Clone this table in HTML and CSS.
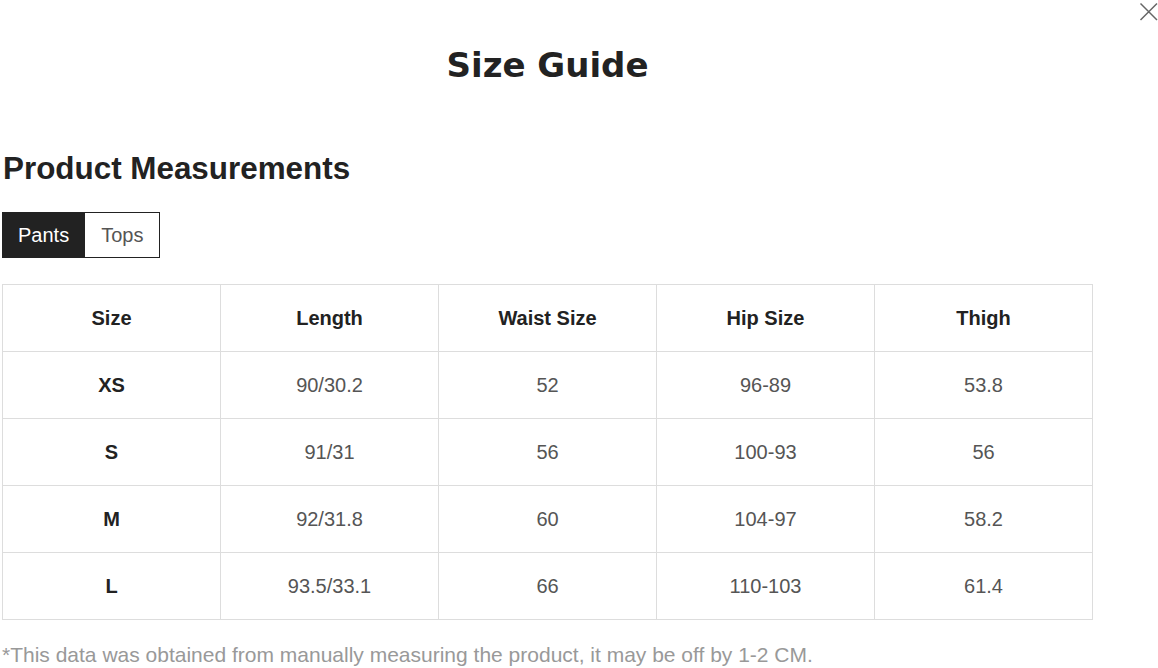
FILE: index.html
```html
<!DOCTYPE html>
<html>
<head>
<meta charset="utf-8">
<link rel="stylesheet" href="styles.css">
</head>
<body>
<button class="close" aria-label="Close">
  <svg width="20" height="20" viewBox="0 0 20 20"><path d="M2.5 2.5L19 19M19 2.5L2.5 19" stroke="#666" stroke-width="1.5" fill="none"/></svg>
</button>
<div class="guide">
  <h1 class="title">Size Guide</h1>
  <h2 class="section">Product Measurements</h2>
  <div class="tabs">
    <span class="tab active">Pants</span>
    <span class="tab">Tops</span>
  </div>
  <table class="sizes">
    <thead>
      <tr><th>Size</th><th>Length</th><th>Waist Size</th><th>Hip Size</th><th>Thigh</th></tr>
    </thead>
    <tbody>
      <tr><th>XS</th><td>90/30.2</td><td>52</td><td>96-89</td><td>53.8</td></tr>
      <tr><th>S</th><td>91/31</td><td>56</td><td>100-93</td><td>56</td></tr>
      <tr><th>M</th><td>92/31.8</td><td>60</td><td>104-97</td><td>58.2</td></tr>
      <tr><th>L</th><td>93.5/33.1</td><td>66</td><td>110-103</td><td>61.4</td></tr>
    </tbody>
  </table>
  <p class="note">*This data was obtained from manually measuring the product, it may be off by 1-2 CM.</p>
</div>
</body>
</html>
```
FILE: styles.css
```css
html, body {
  margin: 0;
  padding: 0;
  background: #fff;
}
body {
  font-family: "Liberation Sans", Arial, sans-serif;
  color: #222;
  width: 1158px;
  height: 668px;
  overflow: hidden;
}
.close {
  position: absolute;
  top: 1px;
  right: 0;
  width: 20px;
  height: 20px;
  padding: 0;
  border: 0;
  background: none;
}
.guide {
  width: 1091px;
  margin-left: 2px;
  padding-top: 45px;
}
.title {
  margin: 0;
  text-align: center;
  font-family: "DejaVu Sans", Verdana, sans-serif;
  font-size: 34px;
  line-height: 40px;
  font-weight: 700;
  color: #222;
}
.section {
  margin: 66px 0 0 1px;
  font-size: 31.4px;
  line-height: 36px;
  font-weight: 700;
  color: #222;
}
.tabs {
  display: flex;
  margin-top: 25px;
}
.tab {
  display: flex;
  align-items: center;
  height: 44px;
  padding: 0 16px;
  border: 1px solid #222;
  font-size: 20px;
  color: #555;
}
.tab.active {
  padding: 0 14px 0 15px;
  background: #222;
  color: #fff;
}
.sizes {
  margin-top: 26px;
  width: 1091px;
  border-collapse: collapse;
  table-layout: fixed;
}
.sizes th, .sizes td {
  height: 66px;
  border: 1px solid #ddd;
  text-align: center;
  font-size: 20px;
  padding: 0;
}
.sizes th {
  font-weight: 700;
  color: #222;
}
.sizes td {
  color: #555;
}
.note {
  margin: 23px 0 0;
  font-size: 21px;
  color: #999;
  white-space: nowrap;
}
```
